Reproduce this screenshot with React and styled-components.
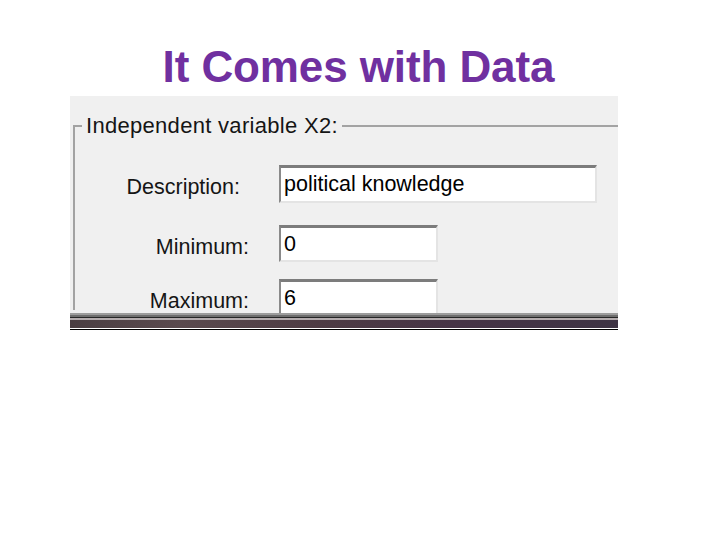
import React from "react";
import styled, { createGlobalStyle } from "styled-components";

const Global = createGlobalStyle`
  html, body { margin: 0; padding: 0; background: #ffffff; }
  body { font-family: "Liberation Sans", Arial, sans-serif; }
`;

const Page = styled.div`
  width: 720px;
  height: 540px;
  overflow: hidden;
  background: #ffffff;
`;

const Title = styled.h1`
  margin: 0;
  padding-top: 45px;
  padding-right: 3px;
  height: 51px;
  font-family: "Liberation Sans", Arial, sans-serif;
  font-weight: 700;
  font-size: 44px;
  line-height: 44px;
  letter-spacing: -0.1px;
  color: #7030a0;
  text-align: center;
`;

const Shot = styled.div`
  margin-left: 70px;
  width: 548px;
  height: 234px;
  background: #f0f0f0;
  display: flex;
  flex-direction: column;
`;

const Body = styled.div`
  height: 217px;
  overflow: hidden;
  padding: 17px 0 0 3px;
  box-sizing: border-box;
`;

const Group = styled.fieldset`
  margin: 0;
  padding: 0;
  height: 197px;
  box-sizing: border-box;
  border: none;
  border-top: 2px solid #a3a3a3;
  border-left: 2px solid #a3a3a3;
  min-width: 0;
`;

const Legend = styled.legend`
  margin-left: 7px;
  padding: 0 4px;
  font-size: 22px;
  line-height: 26px;
  color: #151515;
  letter-spacing: 0.3px;
`;

const Stack = styled.div`
  display: flex;
  flex-direction: column;
`;

const Row = styled.div`
  display: grid;
  grid-template-columns: 204px auto;
  align-items: center;
  margin-top: ${(p) => p.$top}px;
`;

const Label = styled.div`
  text-align: right;
  padding-right: ${(p) => p.$pad}px;
  padding-top: 6px;
  font-size: 21.5px;
  line-height: 26px;
  color: #151515;
  white-space: nowrap;
`;

const TextBox = styled.div`
  width: ${(p) => p.$w}px;
  height: ${(p) => p.$h}px;
  box-sizing: border-box;
  background: #ffffff;
  border-top: 3px solid #7c7c7c;
  border-left: 2px solid #8a8a8a;
  border-right: 2px solid #e4e4e4;
  border-bottom: 2px solid #e4e4e4;
  padding: 0 0 0 3px;
  display: flex;
  align-items: center;
  font-size: 21.5px;
  color: #000;
  white-space: nowrap;
  overflow: hidden;
`;

const BottomBar = styled.div`
  height: 17px;
  background:
    linear-gradient(
      to bottom,
      #9c9c9c 0, #9c9c9c 2px,
      #6e6e6e 2px, #6e6e6e 4px,
      #262626 4px, #262626 5px,
      #b3abad 5px, #b3abad 7px,
      transparent 7px, transparent 15px,
      #ffffff 15px, #ffffff 16px,
      #000000 16px, #000000 17px
    ),
    linear-gradient(
      to right,
      #4a3e42 0%, #5a4a4e 20%, #4e3c44 45%, #463446 70%, #3e3444 100%
    );
`;

const rows = [
  { label: "Description:", pad: 39, top: 26, w: 318, h: 38, value: "political knowledge" },
  { label: "Minimum:", pad: 30, top: 22, w: 159, h: 37, value: "0" },
  { label: "Maximum:", pad: 30, top: 17, w: 159, h: 37, value: "6" },
];

export default function App() {
  return (
    <Page>
      <Global />
      <Title>It Comes with Data</Title>
      <Shot>
        <Body>
          <Group>
            <Legend>Independent variable X2:</Legend>
            <Stack>
              {rows.map((r) => (
                <Row key={r.label} $top={r.top}>
                  <Label $pad={r.pad}>{r.label}</Label>
                  <TextBox $w={r.w} $h={r.h}>{r.value}</TextBox>
                </Row>
              ))}
            </Stack>
          </Group>
        </Body>
        <BottomBar />
      </Shot>
    </Page>
  );
}
